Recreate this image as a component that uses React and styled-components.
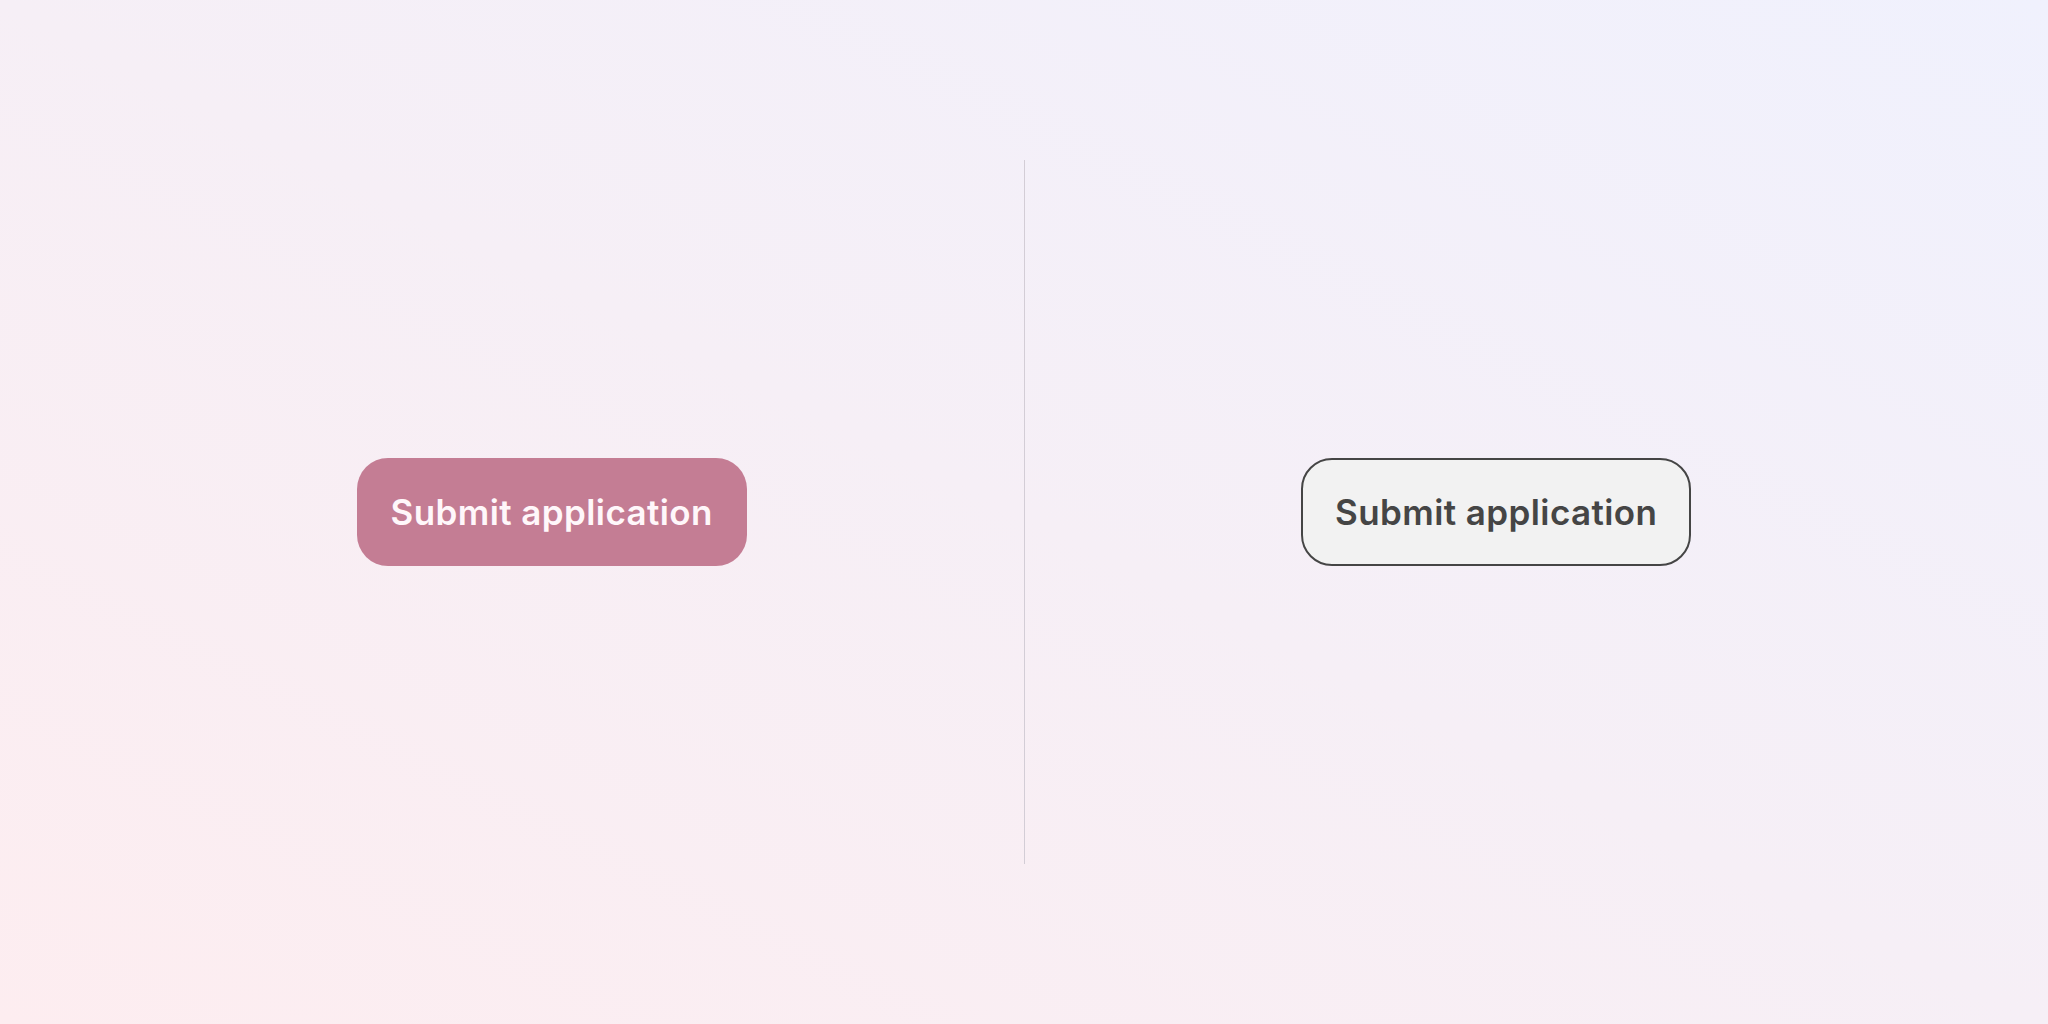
import React from 'react';
import styled, { createGlobalStyle } from 'styled-components';

const GlobalStyle = createGlobalStyle`
  html, body {
    margin: 0;
    padding: 0;
  }
  body {
    font-family: Inter, "Noto Sans", sans-serif;
  }
`;

const Page = styled.div`
  width: 2048px;
  height: 1024px;
  box-sizing: border-box;
  padding: 160px 80px;
  display: flex;
  background: linear-gradient(to top right, #fdedf0 0%, #f6eff6 50%, #f0f1fd 100%);
`;

const Column = styled.div`
  flex: 1;
  display: flex;
  align-items: center;
  justify-content: center;
`;

const Divider = styled.div`
  width: 1px;
  background: #d3cdd6;
`;

const Button = styled.button`
  box-sizing: border-box;
  width: 390px;
  height: 108px;
  padding: 0;
  border-radius: 31px;
  font-family: Inter, "Noto Sans", sans-serif;
  font-size: 35px;
  font-weight: 600;
  letter-spacing: 0.4px;
  cursor: pointer;
  border: ${p => (p.$variant === 'outline' ? '2px solid #454545' : 'none')};
  background: ${p => (p.$variant === 'outline' ? '#f2f2f2' : '#c47d94')};
  color: ${p => (p.$variant === 'outline' ? '#454545' : '#fff7fa')};
`;

export default function App() {
  return (
    <>
      <GlobalStyle />
      <Page>
        <Column>
          <Button>Submit application</Button>
        </Column>
        <Divider />
        <Column>
          <Button $variant="outline">Submit application</Button>
        </Column>
      </Page>
    </>
  );
}
